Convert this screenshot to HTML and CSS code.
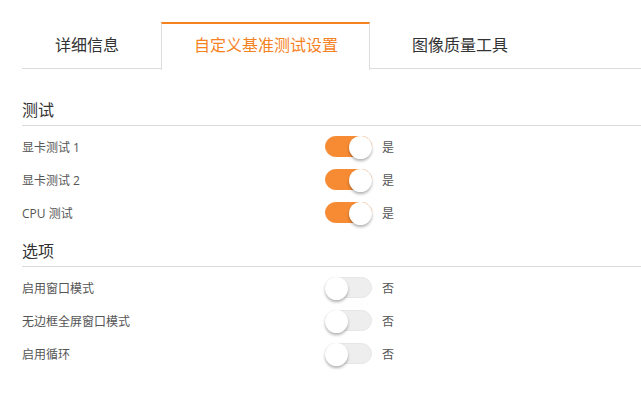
FILE: index.html
```html
<!DOCTYPE html>
<html lang="zh-CN">
<head>
<meta charset="utf-8">
<title>设置</title>
<link rel="stylesheet" href="styles.css">
</head>
<body>
<div class="page">
  <div class="tabs">
    <div class="tab">详细信息</div>
    <div class="tab active">自定义基准测试设置</div>
    <div class="tab">图像质量工具</div>
  </div>

  <div class="section first">
    <div class="section-title">测试</div>
    <div class="rows">
      <div class="row"><span class="label">显卡测试 1</span><span class="toggle on"><span class="knob"></span></span><span class="value">是</span></div>
      <div class="row"><span class="label">显卡测试 2</span><span class="toggle on"><span class="knob"></span></span><span class="value">是</span></div>
      <div class="row"><span class="label">CPU 测试</span><span class="toggle on"><span class="knob"></span></span><span class="value">是</span></div>
    </div>
  </div>

  <div class="section">
    <div class="section-title">选项</div>
    <div class="rows">
      <div class="row"><span class="label">启用窗口模式</span><span class="toggle"><span class="knob"></span></span><span class="value">否</span></div>
      <div class="row"><span class="label">无边框全屏窗口模式</span><span class="toggle"><span class="knob"></span></span><span class="value">否</span></div>
      <div class="row"><span class="label">启用循环</span><span class="toggle"><span class="knob"></span></span><span class="value">否</span></div>
    </div>
  </div>
</div>
</body>
</html>
```

FILE: styles.css
```css
* { box-sizing: border-box; }
html, body { margin: 0; padding: 0; background: #fff; }
body {
  font-family: "Open Sans", "Noto Sans CJK SC", sans-serif;
  color: #555;
  overflow: hidden;
}
.page {
  padding: 22px 0 0 22px;
  width: 641px;
}
.tabs {
  display: flex;
  gap: 8px;
  border-bottom: 1px solid #dcdcdc;
  height: 47px;
}
.tab {
  height: 47px;
  padding: 0 33px;
  font-size: 16px;
  line-height: 43px;
  color: #333;
  border-top: 2px solid transparent;
  border-left: 1px solid transparent;
  border-right: 1px solid transparent;
  white-space: nowrap;
}
.tab:first-child { border-left: 0; }
.tab.active {
  color: #f5821f;
  border-top-color: #f5821f;
  border-left-color: #dcdcdc;
  border-right-color: #dcdcdc;
  background: #fff;
  height: 48px;
  margin-bottom: -1px;
  padding: 0 31px 0 32px;
}
.section-title {
  font-size: 16px;
  line-height: 20px;
  color: #333;
  padding-bottom: 5px;
  border-bottom: 1px solid #dcdcdc;
}
.section.first { margin-top: 31px; }
.section { margin-top: 12px; }
.rows { padding-top: 4px; }
.row {
  display: flex;
  align-items: center;
  height: 33px;
  font-size: 12px;
}
.label {
  width: 303px;
  color: #555;
}
.toggle {
  position: relative;
  width: 47px;
  height: 21px;
  border-radius: 11px;
  background: #eeeeee;
  border: 1px solid #e6e6e6;
}
.toggle.on {
  background: #f68b34;
  border-color: #f68b34;
}
.knob {
  position: absolute;
  top: -1px;
  left: -1px;
  width: 23px;
  height: 23px;
  border-radius: 50%;
  background: #fff;
  box-shadow: 0 2px 3px rgba(0,0,0,0.3);
}
.toggle.on .knob { left: auto; right: -1px; }
.value {
  margin-left: 10px;
  color: #555;
}
```
